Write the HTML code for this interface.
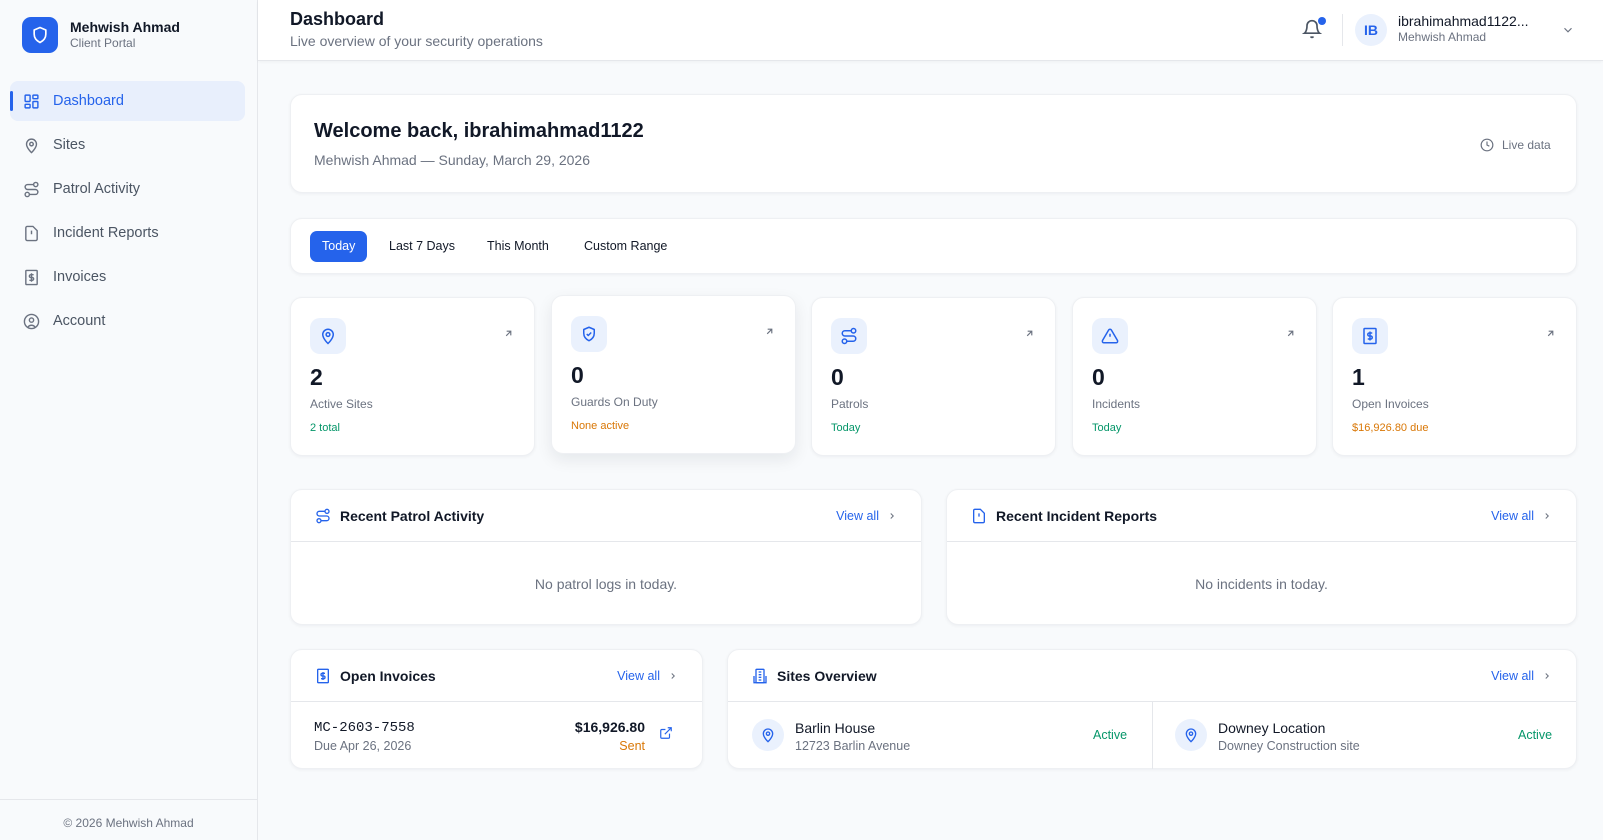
<!DOCTYPE html>
<html><head><meta charset="utf-8">
<style>
*{box-sizing:border-box;margin:0;padding:0}
body{width:1603px;height:840px;overflow:hidden;background:#f8fafc;font-family:"Liberation Sans",sans-serif;color:#111827;position:relative}
.abs{position:absolute}
.side{left:0;top:0;width:258px;height:840px;background:#f8fafc;border-right:1px solid #e5e7eb}
.logo{left:22px;top:17px;width:36px;height:36px;border-radius:9px;background:#2563eb;display:flex;align-items:center;justify-content:center}
.nav{left:10px;width:235px;height:40px;border-radius:8px;display:flex;align-items:center;padding-left:13px;font-size:14.5px;color:#4b5563}
.nav svg{margin-right:13px}
.nav.act{background:#e8effc;color:#2563eb}
.nav.act:before{content:"";position:absolute;left:0;top:10px;width:3px;height:20px;background:#2563eb;border-radius:2px}
.header{left:258px;top:0;width:1345px;height:61px;background:#fff;border-bottom:1px solid #e5e7eb;box-shadow:0 1px 3px rgba(0,0,0,.04)}
.card{background:#fff;border:1px solid #eef0f3;border-radius:12px;box-shadow:0 1px 3px rgba(15,23,42,.05)}
.stat{top:297px;width:245px;height:159px}
.ib{position:absolute;left:19px;top:20px;width:36px;height:36px;border-radius:10px;background:#eaf1fd;display:flex;align-items:center;justify-content:center}
.arr{position:absolute;right:20px;top:30px}
.num{position:absolute;left:19px;top:66px;font-size:23px;font-weight:bold;color:#111827}
.lbl{position:absolute;left:19px;top:99px;font-size:12px;color:#6b7280}
.sub{position:absolute;left:19px;top:124px;font-size:11px}
.ph{position:absolute;left:0;right:0;top:0;height:52px;border-bottom:1px solid #e5e7eb;display:flex;align-items:center;padding:0 24px}
.ph .t{font-size:14px;font-weight:bold;color:#111827;margin-left:9px}
.va{margin-left:auto;font-size:12.5px;color:#2563eb;display:flex;align-items:center}
.va svg{margin-left:8px}
.empty{position:absolute;left:0;right:0;top:86px;text-align:center;font-size:14px;color:#6b7280}
.tab{position:absolute;top:12px;height:31px;line-height:31px;font-size:12.5px;color:#111827;padding:0 12px;border-radius:7px}
</style></head><body>

<div class="abs side">
  <div class="abs logo"><svg width="20" height="20" viewBox="0 0 24 24" fill="none" stroke="#fff" stroke-width="2" stroke-linejoin="round"><path d="M12 3l7 3v5c0 4.5-3 8-7 10-4-2-7-5.5-7-10V6z"/></svg></div>
  <div class="abs" style="left:70px;top:19px;font-size:14px;font-weight:bold;color:#111827">Mehwish Ahmad</div>
  <div class="abs" style="left:70px;top:36px;font-size:12px;color:#6b7280">Client Portal</div>

  <div class="abs nav act" style="top:81px"><svg width="17" height="17" viewBox="0 0 24 24" fill="none" stroke="#2563eb" stroke-width="2"><rect x="3" y="3" width="7" height="9" rx="1"/><rect x="14" y="3" width="7" height="5" rx="1"/><rect x="14" y="12" width="7" height="9" rx="1"/><rect x="3" y="16" width="7" height="5" rx="1"/></svg>Dashboard</div>
  <div class="abs nav" style="top:125px"><svg width="17" height="17" viewBox="0 0 24 24" fill="none" stroke="#6b7280" stroke-width="2"><path d="M12 22s7-6.5 7-12a7 7 0 0 0-14 0c0 5.5 7 12 7 12z"/><circle cx="12" cy="10" r="2.5"/></svg>Sites</div>
  <div class="abs nav" style="top:169px"><svg width="17" height="17" viewBox="0 0 24 24" fill="none" stroke="#6b7280" stroke-width="2"><circle cx="6" cy="19" r="3"/><circle cx="18" cy="5" r="3"/><path d="M9 19h8.5a3.5 3.5 0 0 0 0-7h-11a3.5 3.5 0 0 1 0-7H15"/></svg>Patrol Activity</div>
  <div class="abs nav" style="top:213px"><svg width="17" height="17" viewBox="0 0 24 24" fill="none" stroke="#6b7280" stroke-width="2"><path d="M14 2H6a2 2 0 0 0-2 2v16a2 2 0 0 0 2 2h12a2 2 0 0 0 2-2V8z"/><path d="M12 8v5M12 17h.01"/></svg>Incident Reports</div>
  <div class="abs nav" style="top:257px"><svg width="17" height="17" viewBox="0 0 24 24" fill="none" stroke="#6b7280" stroke-width="2"><rect x="4" y="2" width="16" height="20" rx="1"/><path d="M15 8h-4a2 2 0 0 0 0 4h2a2 2 0 0 1 0 4H9M12 6v12"/></svg>Invoices</div>
  <div class="abs nav" style="top:301px"><svg width="17" height="17" viewBox="0 0 24 24" fill="none" stroke="#6b7280" stroke-width="2"><circle cx="12" cy="12" r="10"/><circle cx="12" cy="10" r="3"/><path d="M7 20a6 6 0 0 1 10 0"/></svg>Account</div>

  <div class="abs" style="left:0;top:799px;width:257px;border-top:1px solid #e5e7eb"></div>
  <div class="abs" style="left:0;top:816px;width:257px;text-align:center;font-size:12px;color:#6b7280">© 2026 Mehwish Ahmad</div>
</div>

<div class="abs header">
  <div class="abs" style="left:32px;top:9px;font-size:18px;font-weight:bold;color:#111827">Dashboard</div>
  <div class="abs" style="left:32px;top:33px;font-size:14px;color:#6b7280">Live overview of your security operations</div>
  <svg class="abs" style="left:1044px;top:19px" width="20" height="20" viewBox="0 0 24 24" fill="none" stroke="#4b5563" stroke-width="2"><path d="M6 8a6 6 0 0 1 12 0c0 7 3 9 3 9H3s3-2 3-9"/><path d="M10.3 21a1.9 1.9 0 0 0 3.4 0"/></svg>
  <div class="abs" style="left:1060px;top:17px;width:8px;height:8px;border-radius:50%;background:#2563eb"></div>
  <div class="abs" style="left:1084px;top:14px;width:1px;height:32px;background:#e5e7eb"></div>
  <div class="abs" style="left:1097px;top:14px;width:32px;height:32px;border-radius:50%;background:#eaf1fd;color:#2563eb;font-size:14px;font-weight:bold;text-align:center;line-height:32px">IB</div>
  <div class="abs" style="left:1140px;top:13px;font-size:14px;font-weight:500;color:#111827">ibrahimahmad1122...</div>
  <div class="abs" style="left:1140px;top:30px;font-size:12px;color:#6b7280">Mehwish Ahmad</div>
  <svg class="abs" style="left:1303px;top:23px" width="14" height="14" viewBox="0 0 24 24" fill="none" stroke="#6b7280" stroke-width="2"><path d="M6 9l6 6 6-6"/></svg>
</div>

<div class="abs card" style="left:290px;top:94px;width:1287px;height:99px">
  <div class="abs" style="left:23px;top:25px;font-size:20px;font-weight:600;color:#111827">Welcome back, ibrahimahmad1122</div>
  <div class="abs" style="left:23px;top:57px;font-size:14px;color:#6b7280">Mehwish Ahmad — Sunday, March 29, 2026</div>
  <svg class="abs" style="left:1189px;top:43px" width="14" height="14" viewBox="0 0 24 24" fill="none" stroke="#6b7280" stroke-width="2"><circle cx="12" cy="12" r="10"/><path d="M12 6v6l4 2"/></svg>
  <div class="abs" style="left:1211px;top:43px;font-size:12px;color:#6b7280">Live data</div>
</div>

<div class="abs card" style="left:290px;top:218px;width:1287px;height:56px">
  <div class="tab" style="left:19px;background:#2563eb;color:#fff">Today</div>
  <div class="tab" style="left:86px">Last 7 Days</div>
  <div class="tab" style="left:184px">This Month</div>
  <div class="tab" style="left:281px">Custom Range</div>
</div>

<!-- stats -->
<div class="abs card stat" style="left:290px">
  <div class="ib"><svg width="18" height="18" viewBox="0 0 24 24" fill="none" stroke="#2563eb" stroke-width="2"><path d="M12 22s7-6.5 7-12a7 7 0 0 0-14 0c0 5.5 7 12 7 12z"/><circle cx="12" cy="10" r="2.5"/></svg></div>
  <svg class="arr" width="11" height="11" viewBox="0 0 24 24" fill="none" stroke="#6b7280" stroke-width="2.5"><path d="M7 17L17 7M8 7h9v9"/></svg>
  <div class="num">2</div><div class="lbl">Active Sites</div><div class="sub" style="color:#059669">2 total</div>
</div>
<div class="abs card stat" style="left:551px;top:295px;box-shadow:0 6px 16px rgba(15,23,42,.08)">
  <div class="ib"><svg width="18" height="18" viewBox="0 0 24 24" fill="none" stroke="#2563eb" stroke-width="2" stroke-linejoin="round"><path d="M12 3l7 3v5c0 4.5-3 8-7 10-4-2-7-5.5-7-10V6z"/><path d="M9 12l2 2 4-4"/></svg></div>
  <svg class="arr" width="11" height="11" viewBox="0 0 24 24" fill="none" stroke="#6b7280" stroke-width="2.5"><path d="M7 17L17 7M8 7h9v9"/></svg>
  <div class="num">0</div><div class="lbl">Guards On Duty</div><div class="sub" style="color:#d97706">None active</div>
</div>
<div class="abs card stat" style="left:811px">
  <div class="ib"><svg width="18" height="18" viewBox="0 0 24 24" fill="none" stroke="#2563eb" stroke-width="2"><circle cx="6" cy="19" r="3"/><circle cx="18" cy="5" r="3"/><path d="M9 19h8.5a3.5 3.5 0 0 0 0-7h-11a3.5 3.5 0 0 1 0-7H15"/></svg></div>
  <svg class="arr" width="11" height="11" viewBox="0 0 24 24" fill="none" stroke="#6b7280" stroke-width="2.5"><path d="M7 17L17 7M8 7h9v9"/></svg>
  <div class="num">0</div><div class="lbl">Patrols</div><div class="sub" style="color:#059669">Today</div>
</div>
<div class="abs card stat" style="left:1072px">
  <div class="ib"><svg width="18" height="18" viewBox="0 0 24 24" fill="none" stroke="#2563eb" stroke-width="2" stroke-linejoin="round"><path d="M10.3 3.9L2 18a2 2 0 0 0 1.7 3h16.6a2 2 0 0 0 1.7-3L13.7 3.9a2 2 0 0 0-3.4 0z"/><path d="M12 9v4M12 17h.01"/></svg></div>
  <svg class="arr" width="11" height="11" viewBox="0 0 24 24" fill="none" stroke="#6b7280" stroke-width="2.5"><path d="M7 17L17 7M8 7h9v9"/></svg>
  <div class="num">0</div><div class="lbl">Incidents</div><div class="sub" style="color:#059669">Today</div>
</div>
<div class="abs card stat" style="left:1332px">
  <div class="ib"><svg width="18" height="18" viewBox="0 0 24 24" fill="none" stroke="#2563eb" stroke-width="2"><rect x="4" y="2" width="16" height="20" rx="1"/><path d="M15 8h-4a2 2 0 0 0 0 4h2a2 2 0 0 1 0 4H9M12 6v12"/></svg></div>
  <svg class="arr" width="11" height="11" viewBox="0 0 24 24" fill="none" stroke="#6b7280" stroke-width="2.5"><path d="M7 17L17 7M8 7h9v9"/></svg>
  <div class="num">1</div><div class="lbl">Open Invoices</div><div class="sub" style="color:#d97706">$16,926.80 due</div>
</div>

<!-- panels -->
<div class="abs card" style="left:290px;top:489px;width:632px;height:136px">
  <div class="ph"><svg width="16" height="16" viewBox="0 0 24 24" fill="none" stroke="#2563eb" stroke-width="2"><circle cx="6" cy="19" r="3"/><circle cx="18" cy="5" r="3"/><path d="M9 19h8.5a3.5 3.5 0 0 0 0-7h-11a3.5 3.5 0 0 1 0-7H15"/></svg><span class="t">Recent Patrol Activity</span><span class="va">View all<svg width="10" height="10" viewBox="0 0 24 24" fill="none" stroke="#6b7280" stroke-width="2.5"><path d="M9 6l6 6-6 6"/></svg></span></div>
  <div class="empty">No patrol logs in today.</div>
</div>
<div class="abs card" style="left:946px;top:489px;width:631px;height:136px">
  <div class="ph"><svg width="16" height="16" viewBox="0 0 24 24" fill="none" stroke="#2563eb" stroke-width="2"><path d="M14 2H6a2 2 0 0 0-2 2v16a2 2 0 0 0 2 2h12a2 2 0 0 0 2-2V8z"/><path d="M12 8v5M12 17h.01"/></svg><span class="t">Recent Incident Reports</span><span class="va">View all<svg width="10" height="10" viewBox="0 0 24 24" fill="none" stroke="#6b7280" stroke-width="2.5"><path d="M9 6l6 6-6 6"/></svg></span></div>
  <div class="empty">No incidents in today.</div>
</div>

<div class="abs card" style="left:290px;top:649px;width:413px;height:120px">
  <div class="ph"><svg width="16" height="16" viewBox="0 0 24 24" fill="none" stroke="#2563eb" stroke-width="2"><rect x="4" y="2" width="16" height="20" rx="1"/><path d="M15 8h-4a2 2 0 0 0 0 4h2a2 2 0 0 1 0 4H9M12 6v12"/></svg><span class="t">Open Invoices</span><span class="va">View all<svg width="10" height="10" viewBox="0 0 24 24" fill="none" stroke="#6b7280" stroke-width="2.5"><path d="M9 6l6 6-6 6"/></svg></span></div>
  <div class="abs" style="left:23px;top:70px;font-family:'Liberation Mono',monospace;font-size:14px;color:#111827">MC-2603-7558</div>
  <div class="abs" style="left:23px;top:89px;font-size:12.5px;color:#6b7280">Due Apr 26, 2026</div>
  <div class="abs" style="right:57px;top:69px;font-size:14px;font-weight:bold;color:#111827">$16,926.80</div>
  <div class="abs" style="right:57px;top:89px;font-size:12.5px;color:#d97706">Sent</div>
  <svg class="abs" style="left:368px;top:76px" width="14" height="14" viewBox="0 0 24 24" fill="none" stroke="#2563eb" stroke-width="2"><path d="M18 13v6a2 2 0 0 1-2 2H5a2 2 0 0 1-2-2V8a2 2 0 0 1 2-2h6M15 3h6v6M10 14L21 3"/></svg>
</div>

<div class="abs card" style="left:727px;top:649px;width:850px;height:120px">
  <div class="ph"><svg width="16" height="16" viewBox="0 0 24 24" fill="none" stroke="#2563eb" stroke-width="2"><rect x="6" y="2" width="12" height="20" rx="1"/><path d="M2 22h20M3 12v10M21 12v10M10 6h4M10 10h4M10 14h4M10 18h4"/></svg><span class="t">Sites Overview</span><span class="va">View all<svg width="10" height="10" viewBox="0 0 24 24" fill="none" stroke="#6b7280" stroke-width="2.5"><path d="M9 6l6 6-6 6"/></svg></span></div>
  <div class="abs" style="left:424px;top:52px;width:1px;height:67px;background:#e5e7eb"></div>
  <div class="abs" style="left:24px;top:69px;width:32px;height:32px;border-radius:50%;background:#eaf1fd;display:flex;align-items:center;justify-content:center"><svg width="16" height="16" viewBox="0 0 24 24" fill="none" stroke="#2563eb" stroke-width="2"><path d="M12 22s7-6.5 7-12a7 7 0 0 0-14 0c0 5.5 7 12 7 12z"/><circle cx="12" cy="10" r="2.5"/></svg></div>
  <div class="abs" style="left:67px;top:70px;font-size:14px;color:#111827">Barlin House</div>
  <div class="abs" style="left:67px;top:89px;font-size:12.5px;color:#6b7280">12723 Barlin Avenue</div>
  <div class="abs" style="left:365px;top:78px;font-size:12.5px;color:#059669">Active</div>
  <div class="abs" style="left:447px;top:69px;width:32px;height:32px;border-radius:50%;background:#eaf1fd;display:flex;align-items:center;justify-content:center"><svg width="16" height="16" viewBox="0 0 24 24" fill="none" stroke="#2563eb" stroke-width="2"><path d="M12 22s7-6.5 7-12a7 7 0 0 0-14 0c0 5.5 7 12 7 12z"/><circle cx="12" cy="10" r="2.5"/></svg></div>
  <div class="abs" style="left:490px;top:70px;font-size:14px;color:#111827">Downey Location</div>
  <div class="abs" style="left:490px;top:89px;font-size:12.5px;color:#6b7280">Downey Construction site</div>
  <div class="abs" style="left:790px;top:78px;font-size:12.5px;color:#059669">Active</div>
</div>

</body></html>
